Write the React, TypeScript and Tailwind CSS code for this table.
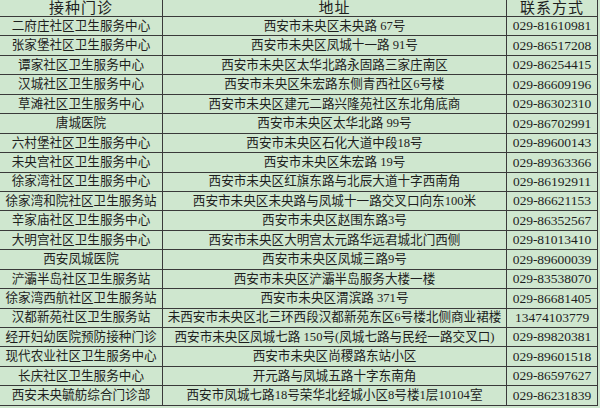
const rows: [string, string, string][] = [
  ["二府庄社区卫生服务中心", "西安市未央区未央路 67号", "029-81610981"],
  ["张家堡社区卫生服务中心", "西安市未央区凤城十一路 91号", "029-86517208"],
  ["谭家社区卫生服务中心", "西安市未央区太华北路永固路三家庄南区", "029-86254415"],
  ["汉城社区卫生服务中心", "西安市未央区朱宏路东侧青西社区6号楼", "029-86609196"],
  ["草滩社区卫生服务中心", "西安市未央区建元二路兴隆苑社区东北角底商", "029-86302310"],
  ["唐城医院", "西安市未央区太华北路 99号", "029-86702991"],
  ["六村堡社区卫生服务中心", "西安市未央区石化大道中段18号", "029-89600143"],
  ["未央宫社区卫生服务中心", "西安市未央区朱宏路 19号", "029-89363366"],
  ["徐家湾社区卫生服务中心", "西安市未央区红旗东路与北辰大道十字西南角", "029-86192911"],
  ["徐家湾和院社区卫生服务站", "西安市未央区未央路与凤城十一路交叉口向东100米", "029-86621153"],
  ["辛家庙社区卫生服务中心", "西安市未央区赵围东路3号", "029-86352567"],
  ["大明宫社区卫生服务中心", "西安市未央区大明宫太元路华远君城北门西侧", "029-81013410"],
  ["西安凤城医院", "西安市未央区凤城三路9号", "029-89600039"],
  ["浐灞半岛社区卫生服务站", "西安市未央区浐灞半岛服务大楼一楼", "029-83538070"],
  ["徐家湾西航社区卫生服务站", "西安市未央区渭滨路 371号", "029-86681405"],
  ["汉都新苑社区卫生服务站", "未西安市未央区北三环西段汉都新苑东区6号楼北侧商业裙楼", "13474103779"],
  ["经开妇幼医院预防接种门诊", "西安市未央区凤城七路 150号(凤城七路与民经一路交叉口)", "029-89820381"],
  ["现代农业社区卫生服务中心", "西安市未央区尚稷路东站小区", "029-89601518"],
  ["长庆社区卫生服务中心", "开元路与凤城五路十字东南角", "029-86597627"],
  ["西安未央毓舫综合门诊部", "西安市凤城七路18号荣华北经城小区8号楼1层10104室", "029-86231839"],
];

const font = { fontFamily: '"Liberation Serif", "Noto Sans CJK SC", serif' };

export default function App() {
  return (
    <div
      className="h-[408px] w-[600px] overflow-hidden bg-[#cfe7cf] text-[#1e1e1e]"
      style={font}
    >
      <div className="w-[598px] border-r border-[#3a3a3a]">
        <div className="grid h-[17px] grid-cols-[163px_344px_1fr] border-b border-[#3a3a3a] text-[15px] leading-none">
          <div className="flex items-center justify-center border-r border-[#3a3a3a] tracking-[1px]">
            接种门诊
          </div>
          <div className="flex items-center justify-center border-r border-[#3a3a3a] tracking-[1px]">
            地址
          </div>
          <div className="flex items-center justify-center tracking-[1px]">联系方式</div>
        </div>
        {rows.map(([name, addr, phone]) => (
          <div
            key={name}
            className="grid h-[19.45px] grid-cols-[163px_344px_1fr] border-b border-[#3a3a3a] leading-none"
          >
            <div className="flex items-center justify-center whitespace-nowrap border-r border-[#3a3a3a] text-[12.6px]">
              {name}
            </div>
            <div className="flex items-center justify-center whitespace-nowrap border-r border-[#3a3a3a] text-[12.6px]">
              {addr}
            </div>
            <div className="flex items-center justify-center whitespace-nowrap text-[13.5px]">
              {phone}
            </div>
          </div>
        ))}
      </div>
    </div>
  );
}
